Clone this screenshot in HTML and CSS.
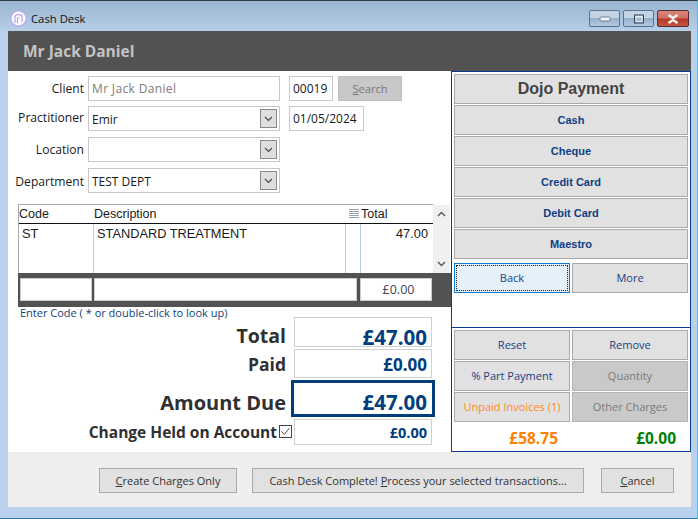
FILE: index.html
```html
<!DOCTYPE html>
<html lang="en">
<head>
<meta charset="utf-8">
<title>Cash Desk</title>
<link rel="stylesheet" href="styles.css">
</head>
<body>
<div class="window">
  <div class="titlebar">
    <svg class="app-icon" width="17" height="17" viewBox="0 0 17 17"><circle cx="8.500" cy="8.500" r="7.700" fill="#fbfaff" stroke="#b4aef2" stroke-width="1.400"/><path d="M5 13V7.500A2.800 2.800 0 0 1 7.800 4.700h1.400A2.800 2.800 0 0 1 12 7.500V12" fill="none" stroke="#b0aaea" stroke-width="1.200"/><path d="M7.500 13V8h2" fill="none" stroke="#b0aaea" stroke-width="1.200"/></svg>
    <span class="title-text">Cash Desk</span>
    <div class="win-btns">
      <div class="win-btn"><svg width="12" height="6" viewBox="0 0 12 6"><rect x="1" y="1" width="10" height="4" rx="1" fill="#f2f2f2" stroke="#5a6a7c" stroke-width=".8"/></svg></div>
      <div class="win-btn"><svg width="12" height="10" viewBox="0 0 12 10"><rect x="1.500" y="1" width="9" height="8" fill="none" stroke="#2f4055" stroke-width="1"/><rect x="3" y="2.500" width="6" height="5" fill="none" stroke="#e8eef5" stroke-width="1"/><rect x="4" y="4" width="4" height="2" fill="#a8bdd2"/></svg></div>
      <div class="win-btn win-close"><svg width="14" height="10" viewBox="0 0 14 10"><path d="M2.500 1 7 4l4.500-3M2.500 9 7 6l4.500 3" fill="none" stroke="#f4f0ee" stroke-width="2.600"/></svg></div>
    </div>
  </div>
  <div class="client-head">Mr Jack Daniel</div>
  <div class="main">
    <div class="left">
      <div class="form">
        <div class="row row-a">
          <span class="lbl">Client</span>
          <div class="field wide muted">Mr Jack Daniel</div>
          <div class="field code">00019</div>
          <div class="btn search"><span><u>S</u>earch</span></div>
        </div>
        <div class="row row-b">
          <span class="lbl">Practitioner</span>
          <div class="field wide low">Emir
            <div class="drop"><svg width="9" height="6" viewBox="0 0 9 6"><path d="M1 1l3.500 3.500L8 1" fill="none" stroke="#444" stroke-width="1.100"/></svg></div>
          </div>
          <div class="field date">01/05/2024</div>
        </div>
        <div class="row row-b row-loc">
          <span class="lbl">Location</span>
          <div class="field wide">
            <div class="drop"><svg width="9" height="6" viewBox="0 0 9 6"><path d="M1 1l3.500 3.500L8 1" fill="none" stroke="#444" stroke-width="1.100"/></svg></div>
          </div>
        </div>
        <div class="row row-c">
          <span class="lbl">Department</span>
          <div class="field wide low">TEST DEPT
            <div class="drop"><svg width="9" height="6" viewBox="0 0 9 6"><path d="M1 1l3.500 3.500L8 1" fill="none" stroke="#444" stroke-width="1.100"/></svg></div>
          </div>
        </div>
      </div>

      <div class="table">
        <div class="table-main">
          <div class="thead">
            <span class="c-code">Code</span>
            <span class="c-desc">Description</span>
            <span class="c-icon"><svg width="10" height="10" viewBox="0 0 10 10"><path d="M0 .5h10M0 2.500h10M0 4.500h10M0 6.500h10M0 8.500h10" stroke="#98a2ae" stroke-width="1"/></svg></span>
            <span class="c-total">Total</span>
          </div>
          <div class="tbody">
            <span class="c-code cell">ST</span>
            <span class="c-desc cell">STANDARD TREATMENT</span>
            <span class="c-icon cell"></span>
            <span class="c-total cell num">47.00</span>
          </div>
        </div>
        <div class="scroll">
          <svg width="9" height="6" viewBox="0 0 9 6"><path d="M1 5l3.500-3.500L8 5" fill="none" stroke="#555" stroke-width="1.400"/></svg>
          <svg width="9" height="6" viewBox="0 0 9 6"><path d="M1 1l3.500 3.500L8 1" fill="none" stroke="#555" stroke-width="1.400"/></svg>
        </div>
      </div>
      <div class="strip">
        <div class="s-input s-code"></div>
        <div class="s-input s-desc"></div>
        <div class="s-input s-total">£0.00</div>
      </div>
      <div class="hint">Enter Code ( * or double-click to look up)</div>

      <div class="totals">
        <div class="t-row r-total"><span class="t-lbl">Total</span><div class="t-box">£47.00</div></div>
        <div class="t-row r-paid"><span class="t-lbl">Paid</span><div class="t-box">£0.00</div></div>
        <div class="t-row r-due"><span class="t-lbl">Amount Due</span><div class="t-box">£47.00</div></div>
        <div class="t-row r-change"><span class="t-lbl">Change Held on Account</span>
          <svg class="check" width="13" height="13" viewBox="0 0 13 13"><rect x=".5" y=".5" width="12" height="12" fill="#fff" stroke="#444"/><path d="M2.500 6.500l2.800 3L10.500 3" fill="none" stroke="#555" stroke-width="1"/></svg>
          <div class="t-box">£0.00</div></div>
      </div>
    </div>

    <div class="panel">
      <div class="pay">
        <div class="btn big dojo">Dojo Payment</div>
        <div class="btn big">Cash</div>
        <div class="btn big">Cheque</div>
        <div class="btn big">Credit Card</div>
        <div class="btn big">Debit Card</div>
        <div class="btn big">Maestro</div>
        <div class="nav">
          <div class="btn act focus"><span>Back</span></div>
          <div class="btn act">More</div>
        </div>
      </div>
      <div class="actions">
        <div class="btn act">Reset</div>
        <div class="btn act">Remove</div>
        <div class="btn act">% Part Payment</div>
        <div class="btn off">Quantity</div>
        <div class="btn act orange">Unpaid Invoices (1)</div>
        <div class="btn off">Other Charges</div>
        <div class="amt a-orange">£58.75</div>
        <div class="amt a-green">£0.00</div>
      </div>
    </div>
  </div>
  <div class="footer">
    <div class="btn foot f-create"><span><u>C</u>reate Charges Only</span></div>
    <div class="btn foot f-done"><span>Cash Desk Complete! <u>P</u>rocess your selected transactions...</span></div>
    <div class="btn foot f-cancel"><span><u>C</u>ancel</span></div>
  </div>
</div>
</body>
</html>
```
FILE: styles.css
```css
* { box-sizing: border-box; }
html, body { margin: 0; padding: 0; }
body { width: 698px; height: 519px; overflow: hidden; font-family: "Open Sans", "Noto Sans", sans-serif; font-size: 11.5px; color: #1a1a1a; }

.window {
  width: 698px; height: 519px;
  padding: 0 6px 7px 8px;
  display: flex; flex-direction: column;
  background: #b9d1ec;
  border-top: 1px solid #2c3a44;
  border-right: 1px solid #4cc0dc;
  border-bottom: 1px solid #2c7f99;
}

.titlebar {
  height: 30px; margin: 0 -6px 0 -8px; padding: 5px 8px 0 10px;
  display: flex; align-items: center;
  background: linear-gradient(#9ab5d1, #b7cfe8);
  flex: none;
}
.app-icon { flex: none; }
.title-text { margin-left: 4px; font-size: 11.300px; color: #111; }
.win-btns { margin-left: auto; display: flex; gap: 3px; }
.win-btn {
  width: 31px; height: 17px; display: flex; align-items: center; justify-content: center;
  border: 1px solid #5d7188; border-radius: 2px;
  background: linear-gradient(#c3d4e5 0, #c3d4e5 45%, #96b0cb 50%, #b4c9de 100%);
}
.win-close { width: 32px; border-color: #5a2a30; background: linear-gradient(#d8897c 0, #cf6f60 45%, #b53a28 55%, #c4553f 100%); }

.client-head {
  height: 40px; flex: none; padding-left: 15px;
  background: #525252; color: #c4c4c4;
  font-weight: 700; font-size: 15.500px; line-height: 40px;
}

.main { height: 381px; flex: none; display: flex; background: #fff; }
.left { width: 443px; flex: none; padding-top: 5px; }

.row { display: flex; align-items: flex-start; }
.row-a { height: 30px; }
.row-b { height: 31px; }
.row-c { height: 26px; }
.lbl { width: 76px; margin-right: 4px; text-align: right; line-height: 24px; font-size: 12.100px; white-space: nowrap; }
.row-a .lbl, .row-loc .lbl { line-height: 26px; }
.row-c .lbl { line-height: 28px; }
.field {
  height: 25px; position: relative; padding-left: 3px; line-height: 24px;
  border: 1px solid #c8c8c8; background: #fff; font-size: 12px; white-space: nowrap;
}
.low { line-height: 25px; }
.wide { width: 192px; }
.muted { color: #7d7d7d; letter-spacing: .35px; }
.code { width: 44px; margin-left: 9px; }
.date { width: 75px; margin-left: 9px; }
.drop {
  position: absolute; right: 2px; top: 2px; width: 17px; height: 19px;
  border: 1px solid #8a8a8a; background: #dedede;
  display: flex; align-items: center; justify-content: center;
}

.btn {
  display: flex; align-items: center; justify-content: center;
  border: 1px solid #aaa; background: #e1e1e1; white-space: nowrap;
}
.search { width: 64px; height: 25px; margin-left: 5px; background: #c8c8c8; border-color: #c0c0c0; color: #777; font-size: 11px; }

.table { margin: 10px 0 0 10px; width: 433px; height: 69px; display: flex; }
.table-main { width: 415px; border: 1px solid #aaa; border-right: none; border-bottom: none; flex: none; }
.thead, .tbody { display: grid; grid-template-columns: 75px 252px 15px 72px; font-family: "Liberation Sans", Arial, sans-serif; font-size: 12.500px; }
.thead { height: 19px; border-bottom: 1px solid #111; line-height: 18px; }
.tbody { height: 49px; line-height: 19px; font-size: 12.800px; }
.c-icon { display: flex; align-items: center; justify-content: center; }
.cell { border-right: 1px solid #a6cdf5; }
.tbody .c-code { padding-left: 3px; }
.tbody .c-desc { padding-left: 3px; }
.tbody .num { border-right: none; text-align: right; padding-right: 5px; }
.scroll {
  width: 17px; margin-top: 1px; background: #f0f0f0; flex: none;
  display: flex; flex-direction: column; align-items: center; justify-content: space-between; padding: 6px 0;
}

.strip {
  margin-left: 10px; width: 433px; height: 34px;
  background: #525252; display: flex; gap: 2px; padding: 5px 19px 6px 2px;
}
.s-input { height: 23px; background: #fff; border: 1px solid #ccc; }
.s-code { width: 72px; }
.s-desc { width: 263px; }
.s-total { width: 72px; margin-left: 1px; padding-left: 5px; text-align: center; line-height: 21px; color: #445; font-size: 12.500px; }

.hint { margin-left: 12px; height: 10px; line-height: 12px; font-size: 11px; color: #0f3f7a; white-space: nowrap; }

.totals { display: flex; flex-direction: column; gap: 2px; }
.t-row { display: flex; justify-content: flex-end; align-items: flex-start; padding-right: 19px; font-weight: 700; color: #303030; }
.t-lbl { margin-right: 8px; white-space: nowrap; }
.t-box {
  width: 138px; text-align: right; padding-right: 4px;
  border: 1px solid #cfcfcf; color: #003e7e; white-space: nowrap;
}
.r-total { height: 30px; }
.r-total .t-box { height: 30px; font-size: 20.500px; line-height: 38px; }
.r-total .t-lbl { font-size: 19.500px; line-height: 38px; }
.r-paid { height: 29px; }
.r-paid .t-box { height: 29px; font-size: 17px; line-height: 29px; }
.r-paid .t-lbl { font-size: 17.500px; line-height: 31px; }
.r-due { height: 37px; padding-right: 16px; }
.r-due .t-lbl { font-size: 20px; margin-right: 5px; line-height: 45px; }
.r-due .t-box { width: 144px; height: 37px; border: 3px solid #003e7e; font-size: 20.500px; line-height: 39px; padding-right: 5px; }
.r-change { height: 26px; align-items: center; }
.r-change .t-lbl { font-size: 15.500px; margin-right: 2px; }
.check { flex: none; margin-right: 2px; margin-top: -2px; }
.r-change .t-box { height: 26px; font-size: 14.500px; line-height: 25px; }

.panel { width: 240px; flex: none; border: 1px solid #0b3a96; display: flex; flex-direction: column; }
.pay { height: 256px; padding: 2px 2px 0; display: flex; flex-direction: column; gap: 1px; border-bottom: 1px solid #0b3a96; flex: none; }
.big { height: 30px; font-family: "Liberation Sans", Arial, sans-serif; font-weight: 700; font-size: 11px; color: #0e3f84; flex: none; }
.dojo { font-size: 16px; color: #444; }
.nav { margin-top: 3px; display: grid; grid-template-columns: 116px 116px; gap: 2px; }
.act { height: 30px; padding-bottom: 2px; color: #183f80; font-size: 11px; }
.focus { background: #e4f0fa; border: 1px solid #0a78d0; position: relative; }
.focus span { position: absolute; inset: 1px; border: 1px dotted #222; display: flex; align-items: center; justify-content: center; padding-bottom: 1px; }
.off { height: 30px; padding-bottom: 2px; background: #c9c9c9; border-color: #b4b4b4; color: #7a7a7a; font-size: 11px; }
.orange { color: #ff8a20; }
.actions { padding: 2px 2px 0; display: grid; grid-template-columns: 116px 116px; column-gap: 2px; row-gap: 1px; }
.amt { height: 28px; padding-top: 1px; display: flex; align-items: center; font-weight: 700; font-size: 15.500px; }
.a-orange { color: #ff7f00; justify-content: flex-end; padding-right: 12px; }
.a-green { color: #007f00; justify-content: flex-end; padding-right: 12px; }

.footer {
  height: 55px; flex: none; background: #eee;
  display: flex; align-items: flex-start; padding: 16px 0 0 91px; margin-bottom: 4px;
}
.foot { height: 25px; color: #333; font-size: 11px; }
.f-create { width: 138px; }
.f-done { width: 332px; margin-left: 15px; }
.f-cancel { width: 73px; margin-left: 17px; }
```
